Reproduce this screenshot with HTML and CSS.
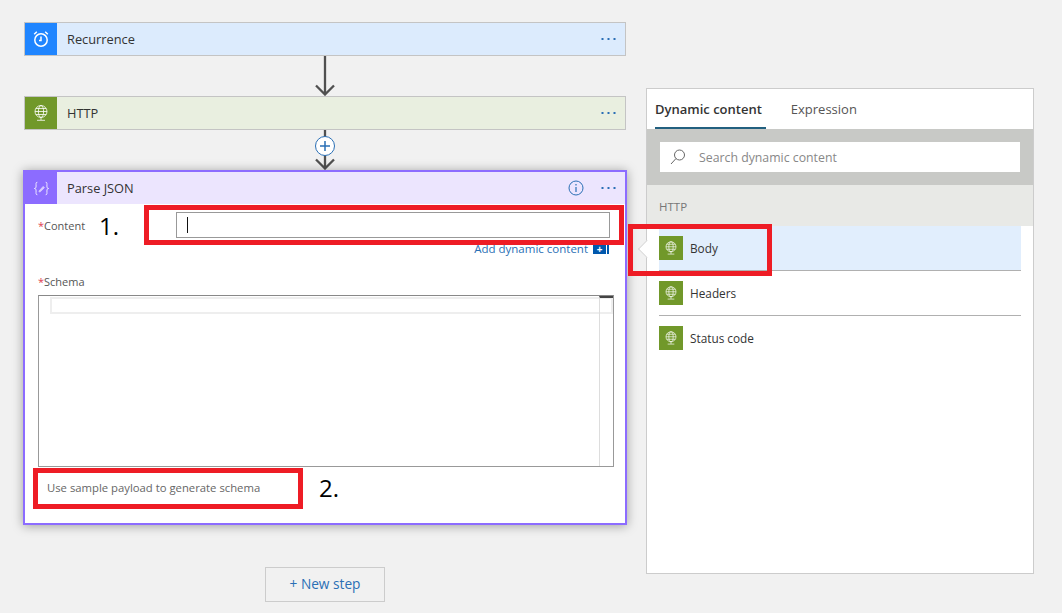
FILE: index.html
```html
<!DOCTYPE html>
<html lang="en">
<head>
<meta charset="utf-8">
<title>Parse JSON</title>
<link rel="stylesheet" href="styles.css">
</head>
<body>
<svg class="defs" width="0" height="0" aria-hidden="true">
  <symbol id="globe" viewBox="0 0 24 24">
    <g fill="none" stroke="#fff" stroke-width="0.8">
      <circle cx="12" cy="10.500" r="6"/>
      <ellipse cx="12" cy="10.500" rx="2.600" ry="6"/>
      <path d="M6 10.500h12M6.800 7.500h10.400M6.800 13.500h10.400M12 16.500v2.500M8 19.300h8"/>
    </g>
  </symbol>
  <symbol id="dots" viewBox="0 0 16 4">
    <g fill="#2a6fb5"><rect x="0.500" y="1" width="2" height="2"/><rect x="6.500" y="1" width="2" height="2"/><rect x="12.500" y="1" width="2" height="2"/></g>
  </symbol>
</svg>

<main class="canvas">
  <section class="flow">
    <div class="card card-blue">
      <div class="card-icon icon-blue">
        <svg width="18" height="18" viewBox="0 0 18 18" fill="none" stroke="#fff" stroke-width="1.500"><circle cx="9" cy="10" r="6.200"/><path d="M9 6.500V10.500H7M2.200 4.200 4.800 1.800M15.800 4.200 13.200 1.800"/></svg>
      </div>
      <span class="card-title">Recurrence</span>
      <svg class="dots" width="16" height="4"><use href="#dots"/></svg>
    </div>

    <svg class="connector" width="24" height="40" viewBox="0 0 24 40" fill="none" stroke="#505050" stroke-width="2.300"><path d="M12 0V38M3 29.500l9 9 9-9"/></svg>

    <div class="card card-green">
      <div class="card-icon icon-green"><svg width="24" height="24"><use href="#globe"/></svg></div>
      <span class="card-title">HTTP</span>
      <svg class="dots" width="16" height="4"><use href="#dots"/></svg>
    </div>

    <svg class="connector" width="24" height="40" viewBox="0 0 24 40" fill="none"><path d="M12 0V38M3 29.500l9 9 9-9" stroke="#505050" stroke-width="2.300"/><circle cx="12" cy="16" r="9.500" fill="#fff" stroke="#2a6fb5"/><path d="M12 11v10M7 16h10" stroke="#2a6fb5" stroke-width="1.500"/></svg>

    <div class="parse">
      <div class="parse-head">
        <div class="parse-icon">
          <svg width="17" height="15" viewBox="0 0 20 18" fill="none" stroke="#fff" stroke-width="1"><path d="M5 1.500C3 1.500 3.500 3.500 3.500 6S3 8.500 1.500 9C3 9.500 3.500 9.500 3.500 12S3 16.500 5 16.500M15 1.500C17 1.500 16.500 3.500 16.500 6S17 8.500 18.500 9C17 9.500 16.500 9.500 16.500 12S17 16.500 15 16.500"/><path d="M7 12 12 6.500l1.500 1.500L8.500 13H7z" fill="#d9ccff" stroke="#d9ccff"/></svg>
        </div>
        <span class="card-title">Parse JSON</span>
        <svg class="info" width="16" height="16" viewBox="0 0 16 16" fill="none" stroke="#2a6fb5"><circle cx="8" cy="8" r="7"/><path d="M8 7v5M8 4v1.500" stroke-width="1.200"/></svg>
        <svg class="dots" width="16" height="4"><use href="#dots"/></svg>
      </div>
      <div class="parse-body">
        <div class="field-row">
          <label class="field-label"><span class="req">*</span>Content</label>
          <div class="text-input"><span class="caret"></span></div>
        </div>
        <div class="add-row">
          <span class="add-link">Add dynamic content</span>
          <span class="add-plus">+</span>
          <span class="add-bar"></span>
        </div>
        <label class="field-label schema-label"><span class="req">*</span>Schema</label>
        <div class="editor">
          <div class="editor-line"></div>
          <div class="editor-rail"></div>
        </div>
        <div class="sample-link">Use sample payload to generate schema</div>
      </div>
    </div>

    <button class="new-step" type="button">+ New step</button>
  </section>

  <aside class="panel">
    <div class="tabs">
      <span class="tab tab-active">Dynamic content</span>
      <span class="tab">Expression</span>
    </div>
    <div class="search-band">
      <div class="search-box">
        <svg width="16" height="17" viewBox="0 0 16 17" fill="none" stroke="#666"><circle cx="9.500" cy="6" r="5"/><path d="M6 9.500 1 15"/></svg>
        <span>Search dynamic content</span>
      </div>
    </div>
    <div class="group-band">HTTP</div>
    <ul class="tokens">
      <li class="token token-selected"><span class="token-icon"><svg width="20" height="20"><use href="#globe"/></svg></span>Body</li>
      <li class="token"><span class="token-icon"><svg width="20" height="20"><use href="#globe"/></svg></span>Headers</li>
      <li class="token token-last"><span class="token-icon"><svg width="20" height="20"><use href="#globe"/></svg></span>Status code</li>
    </ul>
    <span class="notch"></span>
  </aside>
</main>

<div class="mark mark-content"></div>
<div class="mark mark-body"></div>
<div class="mark mark-sample"></div>
<span class="step-num num-one">1.</span>
<span class="step-num num-two">2.</span>
</body>
</html>
```
FILE: styles.css
```css
* { box-sizing: border-box; }
html, body { margin: 0; height: 613px; overflow: hidden; }
body {
  position: relative;
  background: #f1f1f1;
  font-family: "Open Sans", "Noto Sans", sans-serif;
  font-size: 13px;
  color: #333;
}
.defs { position: absolute; }
.canvas { display: flex; align-items: flex-start; padding-left: 24px; gap: 20px; }

/* left flow */
.flow { width: 602px; padding-top: 22px; display: flex; flex-direction: column; align-items: center; }
.card {
  width: 100%;
  height: 34px;
  display: flex;
  align-items: center;
  border: 1px solid #c4c4c4;
}
.card-blue { background: #dcebfd; }
.card-green { background: #e9efe0; }
.card-icon { width: 32px; height: 32px; display: flex; align-items: center; justify-content: center; }
.icon-blue { background: #1f85ff; }
.icon-green { background: #71982a; }
.card-title { margin-left: 10px; flex: 1; font-size: 12.800px; color: #333; }
.dots { margin-right: 8px; }
.connector { display: block; margin-top: 0; flex: none; }

.parse {
  width: 604px;
  height: 355px;
  border: 2px solid #8c6cff;
  background: #fff;
  box-shadow: 0 1px 10px rgba(0, 0, 0, .35);
  position: relative;
}
.parse-head { height: 32px; display: flex; align-items: center; background: #ece5fe; }
.parse-icon { width: 32px; height: 32px; background: #8c6cff; display: flex; align-items: center; justify-content: center; }
.info { margin-right: 17px; }
.parse-body { padding: 8px 13px 0; }
.field-row { display: flex; align-items: center; height: 26px; }
.field-label { display: block; font-size: 11px; color: #555; }
.field-row .field-label { width: 138px; }
.req { color: #e04050; margin-right: 0; }
.text-input { width: 434px; height: 26px; border: 1px solid #999; padding: 4px 10px; }
.caret { display: block; width: 1px; height: 16px; background: #111; }
.add-row { display: flex; align-items: center; height: 14px; margin-top: 3px; padding-right: 3px; justify-content: flex-end; }
.add-link { font-size: 11.500px; color: #2a6fb5; margin-right: 5px; }
.add-plus { width: 13px; height: 10px; margin-top: 1px; background: #0058ad; color: #fff; font-size: 10px; font-weight: 700; line-height: 10px; text-align: center; }
.add-bar { width: 2px; height: 10px; margin: 1px 0 0 1px; background: #0058ad; }
.schema-label { margin-top: 18px; height: 18px; line-height: 18px; }
.editor { position: relative; width: 576px; height: 172px; margin-top: 4px; border: 1px solid #999; background: #fff; border-top-color: #888; }
.editor-line { position: absolute; left: 11px; top: 1px; width: 563px; height: 17px; border: 2px solid #eee; }
.editor-rail { position: absolute; right: 0; top: 0; width: 14px; height: 170px; border-left: 1px solid #ddd; border-top: 2px solid #444; }
.sample-link { margin: 13px 0 0 9px; font-size: 11.300px; color: #666; }
.new-step {
  margin-top: 42px;
  width: 120px;
  height: 35px;
  border: 1px solid #ccc;
  background: #f1f1f1;
  color: #2a6fb5;
  font: 13.700px "Open Sans", "Noto Sans", sans-serif;
  padding: 0 0 2px;
}

/* right panel */
.panel { position: relative; width: 388px; height: 486px; margin-top: 88px; background: #fff; border: 1px solid #ccc; }
.tabs { height: 40px; display: flex; padding-left: 8px; gap: 25px; }
.tab { height: 40px; line-height: 40px; font-size: 13px; color: #555; padding-right: 4px; }
.tab-active { font-weight: 600; color: #333; border-bottom: 2px solid #22607f; }
.search-band { height: 56px; background: #c8c9c6; padding: 13px 13px; }
.search-box { height: 30px; background: #fff; display: flex; align-items: center; padding-left: 10px; gap: 13px; font-size: 12.300px; color: #888; }
.group-band { height: 41px; line-height: 43px; background: #e8e9e6; padding-left: 12px; font-size: 11.500px; color: #777; }
.tokens { list-style: none; margin: 0; padding: 0 12px; }
.token { height: 45px; display: flex; align-items: center; gap: 7px; border-bottom: 1px solid #b0b0b0; font-size: 11.800px; color: #333; }
.token-selected { background: #e1eefd; }
.token-last { border-bottom-color: transparent; }
.token-icon { width: 24px; height: 24px; background: #71982a; display: flex; align-items: center; justify-content: center; }
.notch {
  position: absolute;
  left: -9px;
  top: 151px;
  width: 18px;
  height: 18px;
  background: #fff;
  transform: rotate(45deg) scale(.7);
  border-left: 1px solid #ccc;
  border-bottom: 1px solid #ccc;
}

/* annotations drawn over the screenshot */
.mark { position: absolute; border: 5px solid #ee1c25; }
.mark-content { left: 144px; top: 205px; width: 480px; height: 40px; }
.mark-body { left: 628px; top: 224px; width: 144px; height: 52px; }
.mark-sample { left: 33px; top: 468px; width: 270px; height: 41px; }
.step-num { position: absolute; font-size: 24px; line-height: 30px; color: #000; }
.num-one { left: 99px; top: 211px; }
.num-two { left: 319px; top: 473px; }
```
